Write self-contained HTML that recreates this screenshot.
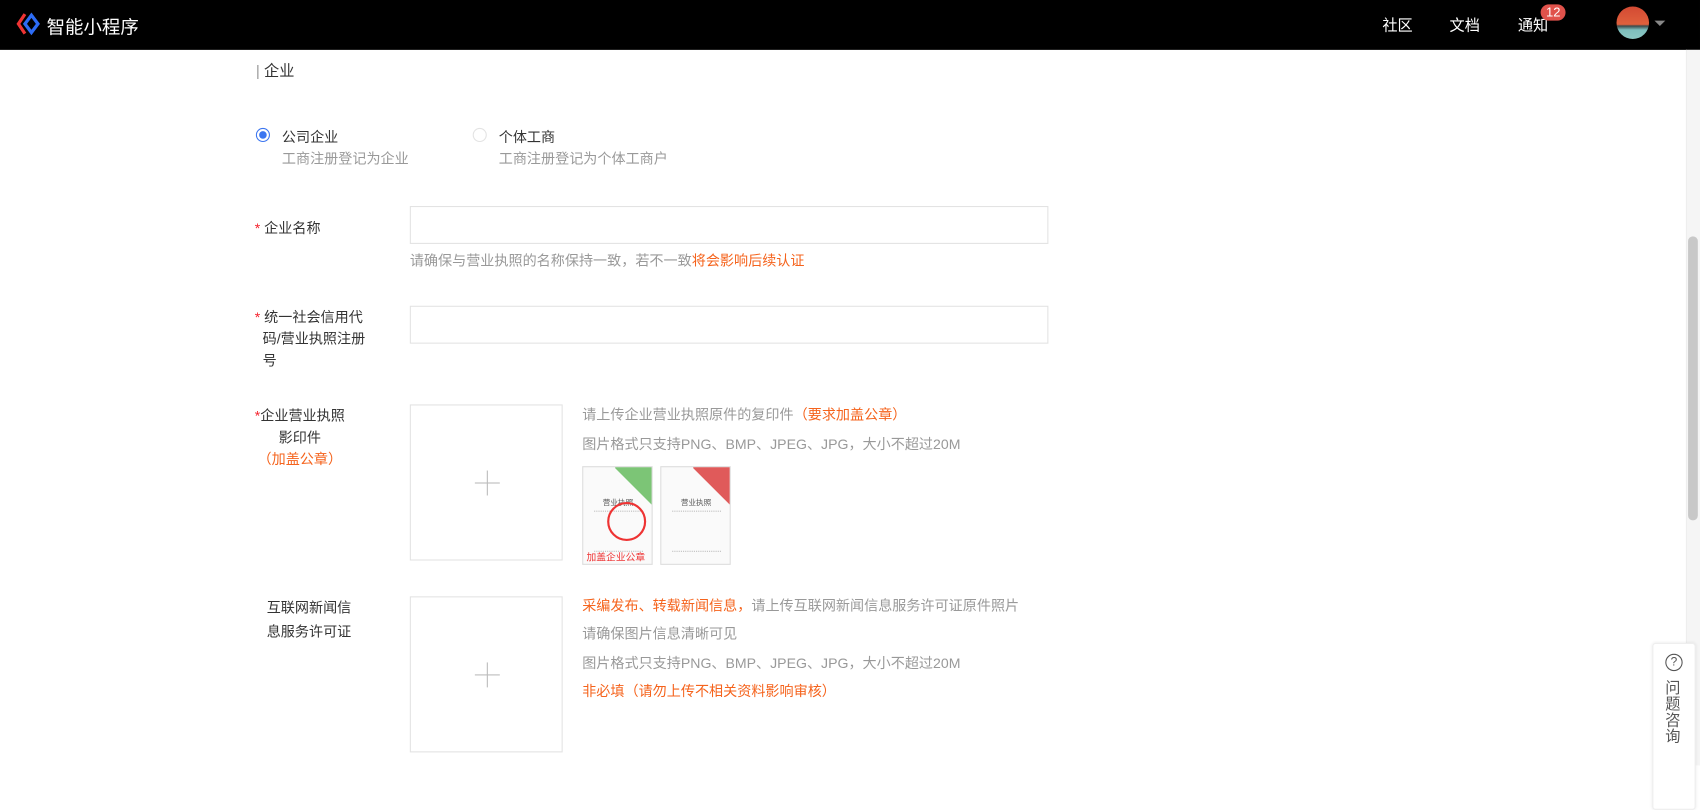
<!DOCTYPE html>
<html><head><meta charset="utf-8"><style>
*{margin:0;padding:0;box-sizing:border-box}
body{width:1700px;height:761px;overflow:hidden;background:#fff;font-family:"Liberation Sans","Noto Sans CJK SC",sans-serif;font-size:13px;color:#333;position:relative}
#w{position:absolute;left:0;top:0;width:1568px;height:702px;transform:scale(1.08418);transform-origin:0 0}
.a{position:absolute;white-space:nowrap}
.hd{position:absolute;left:0;top:0;width:1568px;height:46px;background:#000;color:#fff}
.g{color:#999}.o{color:#f5631c}.r{color:#f5222d}
.inp{position:absolute;left:378px;width:589px;height:35px;border:1px solid #e3e3e3}
.up{position:absolute;left:378px;width:141px;height:144px;border:1px solid #e3e3e3}
.up:before{content:"";position:absolute;left:59px;top:71px;width:23px;height:1px;background:#bbb}
.up:after{content:"";position:absolute;left:70px;top:60px;width:1px;height:23px;background:#bbb}
.lic{position:absolute;top:430px;width:65px;height:91px;border:1px solid #ddd;background:#fafafa;overflow:hidden}
</style></head><body><div id="w">
<div class="hd">
<svg class="a" style="left:15px;top:11px" width="22" height="22" viewBox="0 0 22 22"><path d="M8 2 L2 11 L8 20" stroke="#e33" stroke-width="3" fill="none"/><path d="M14 3 L8 11 L14 19 L20 11 Z" stroke="#2d6cf5" stroke-width="3" fill="none"/></svg>
<div class="a" style="left:43px;top:11px;font-size:17px">智能小程序</div>
<div class="a" style="left:1275px;top:13px;font-size:14px">社区</div>
<div class="a" style="left:1337px;top:13px;font-size:14px">文档</div>
<div class="a" style="left:1400px;top:13px;font-size:14px">通知</div>
<div class="a" style="left:1421px;top:4px;height:15px;padding:0 5px;border-radius:8px;background:#e0524b;font-size:12px;line-height:15px">12</div>
<div class="a" style="left:1491px;top:6px;width:30px;height:30px;border-radius:50%;background:linear-gradient(#d34a33 0,#e0603c 55%,#3b4a4a 60%,#7fbfbd 72%,#8cc8c4 100%)"></div>
<div class="a" style="left:1526px;top:19px;border:5px solid transparent;border-top-color:#888"></div>
</div>
<div class="a" style="left:1555px;top:46px;width:13px;height:660px;background:#f5f5f5;border-left:1px solid #eee"></div>
<div class="a" style="left:1557px;top:218px;width:9px;height:262px;background:#c8c8c8;border-radius:5px"></div>

<div class="a" style="left:236px;top:55px;font-size:14px"><span style="color:#999">|</span> 企业</div>
<div class="a" style="left:236px;top:118px;width:13px;height:13px;border:1px solid #3c76f0;border-radius:50%"><div style="margin:2px;width:7px;height:7px;border-radius:50%;background:#3c76f0"></div></div>
<div class="a" style="left:260px;top:116px">公司企业</div>
<div class="a g" style="left:260px;top:136px">工商注册登记为企业</div>
<div class="a" style="left:436px;top:118px;width:13px;height:13px;border:1px solid #e3e3e3;border-radius:50%"></div>
<div class="a" style="left:460px;top:116px">个体工商</div>
<div class="a g" style="left:460px;top:136px">工商注册登记为个体工商户</div>

<div class="a" style="left:235px;top:200px"><span class="r">* </span>企业名称</div>
<div class="inp" style="top:190px"></div>
<div class="a g" style="left:378px;top:230px">请确保与营业执照的名称保持一致，若不一致<span class="o">将会影响后续认证</span></div>

<div class="a" style="left:235px;top:283px;line-height:20px;white-space:normal;width:110px"><span class="r">* </span>统一社会信用代<br>&nbsp;&nbsp;码/营业执照注册<br>&nbsp;&nbsp;号</div>
<div class="inp" style="top:282px"></div>

<div class="a" style="left:235px;top:374px;line-height:20px;text-align:center"><span class="r">*</span>企业营业执照<br>影印件<br><span class="o">（加盖公章）</span></div>
<div class="up" style="top:373px"></div>
<div class="a g" style="left:537px;top:372px">请上传企业营业执照原件的复印件<span class="o">（要求加盖公章）</span></div>
<div class="a g" style="left:537px;top:399px">图片格式只支持PNG、BMP、JPEG、JPG，大小不超过20M</div>
<div class="lic" style="left:537px"><div class="a" style="right:-18px;top:-4px;width:50px;height:26px;background:#7cc576;transform:rotate(45deg)"></div><div class="a" style="left:18px;top:28px;font-size:7px;color:#555">营业执照</div><div class="a" style="left:10px;top:40px;width:45px;height:38px;border-top:1px dotted #bbb;border-bottom:1px dotted #bbb"></div><div class="a" style="left:22px;top:32px;width:36px;height:36px;border:2px solid #e33;border-radius:50%"></div><div class="a" style="left:3px;top:76px;font-size:9px;color:#e33">加盖企业公章</div></div>
<div class="lic" style="left:609px"><div class="a" style="right:-18px;top:-4px;width:50px;height:26px;background:#e05a5a;transform:rotate(45deg)"></div><div class="a" style="left:18px;top:28px;font-size:7px;color:#555">营业执照</div><div class="a" style="left:10px;top:40px;width:45px;height:38px;border-top:1px dotted #bbb;border-bottom:1px dotted #bbb"></div></div>

<div class="a" style="left:246px;top:550px;line-height:22px">互联网新闻信<br>息服务许可证</div>
<div class="up" style="top:550px"></div>
<div class="a g" style="left:537px;top:548px"><span class="o">采编发布、转载新闻信息，</span>请上传互联网新闻信息服务许可证原件照片</div>
<div class="a g" style="left:537px;top:574px">请确保图片信息清晰可见</div>
<div class="a g" style="left:537px;top:601px">图片格式只支持PNG、BMP、JPEG、JPG，大小不超过20M</div>
<div class="a o" style="left:537px;top:627px">非必填（请勿上传不相关资料影响审核）</div>

<div class="a" style="left:1524px;top:593px;width:40px;height:154px;border:1px solid #eee;border-radius:3px;background:#fff;box-shadow:0 0 3px rgba(0,0,0,.08)"><div class="a" style="left:11px;top:9px;width:16px;height:16px;border:1px solid #555;border-radius:50%;font-size:11px;line-height:14px;text-align:center;color:#555">?</div><div class="a" style="left:11px;top:33px;width:16px;font-size:14px;line-height:15px;white-space:normal;color:#555">问题咨询</div></div>
</div></body></html>
